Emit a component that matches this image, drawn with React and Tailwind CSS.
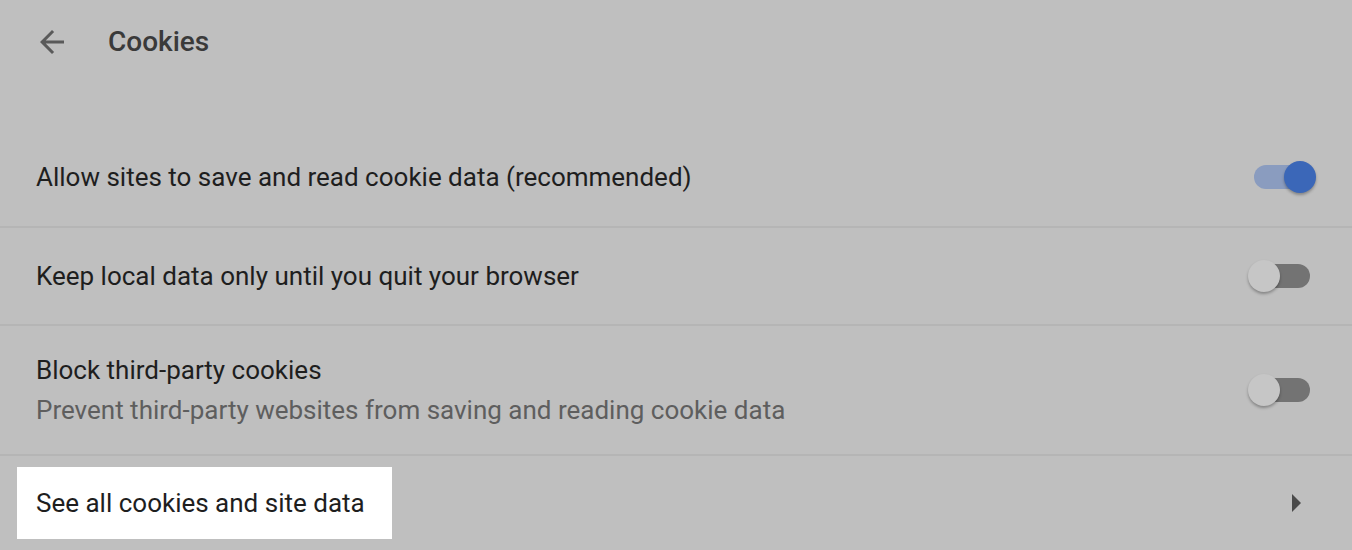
import React from "react";

const Toggle = ({ on }) =>
    on ? (
        <div className="relative w-[62px] h-[32px] flex items-center">
            <div className="absolute left-0 w-[56px] h-[24px] rounded-full bg-[#8a9cbf]" />
            <div className="absolute right-0 w-[32px] h-[32px] rounded-full bg-[#3b67b8] shadow-[0_2px_3px_rgba(0,0,0,0.3)]" />
        </div>
    ) : (
        <div className="relative w-[62px] h-[32px] flex items-center mr-[6px]">
            <div className="absolute left-[6px] w-[56px] h-[24px] rounded-full bg-[#737373]" />
            <div className="absolute left-0 w-[32px] h-[32px] rounded-full bg-[#c6c6c6] shadow-[0_2px_3px_rgba(0,0,0,0.3)]" />
        </div>
    );

const Row = ({ title, sub, on, first, className = "" }) => (
    <div className={`flex items-center justify-between pl-[36px] pr-[36px] ${first ? "" : "border-t-2 border-[#b5b5b5]"} ${className}`}>
        <div className="flex flex-col">
            <div className="text-[26px] text-[#1e1e1e] leading-[40px]">{title}</div>
            {sub && <div className="text-[26px] text-[#5e5e5e] leading-[40px]">{sub}</div>}
        </div>
        <Toggle on={on} />
    </div>
);

export default function App() {
    return (
        <div className="w-[1352px] h-[550px] overflow-hidden bg-[#bfbfbf] font-['Roboto',sans-serif]">
            <div className="flex items-center h-[84px] pl-[34px]">
                <svg width="36" height="36" viewBox="0 0 24 24" className="text-[#5a5a5a]">
                    <path d="M20 11H7.83l5.59-5.59L12 4l-8 8 8 8 1.41-1.41L7.83 13H20v-2z" fill="currentColor" />
                </svg>
                <div className="ml-[38px] text-[28px] font-medium text-[#3a3a3a]">Cookies</div>
            </div>
            <div className="h-[44px]" />
            <Row title="Allow sites to save and read cookie data (recommended)" on first className="h-[98px]" />
            <Row title="Keep local data only until you quit your browser" className="h-[98px]" />
            <Row
                title="Block third-party cookies"
                sub="Prevent third-party websites from saving and reading cookie data"
                className="h-[130px]"
            />
            <div className="flex items-center justify-between h-[96px] pl-[17px] pr-[50px] border-t-2 border-[#b5b5b5]">
                <div className="bg-white h-[72px] w-[375px] flex items-center pl-[19px] text-[26px] text-[#1e1e1e]">
                    See all cookies and site data
                </div>
                <svg width="10" height="18" viewBox="0 0 10 18">
                    <path d="M0 0 L9 9 L0 18 Z" fill="#4a4a4a" />
                </svg>
            </div>
        </div>
    );
}
